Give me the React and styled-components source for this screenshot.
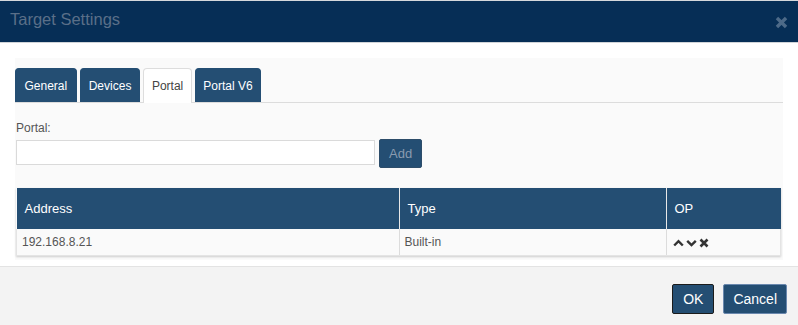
import styled, { createGlobalStyle } from "styled-components";

const GlobalStyle = createGlobalStyle`
  body {
    margin: 0;
    background: #ffffff;
    font-family: "Liberation Sans", Arial, sans-serif;
  }
`;

const Modal = styled.div`
  width: 798px;
  height: 325px;
  display: flex;
  flex-direction: column;
  background: #ffffff;
`;

const Header = styled.header`
  height: 43px;
  border-top: 1px solid #d5d8dc;
  border-bottom: 1px solid #d0d4d8;
  background: #062e56;
  display: flex;
  align-items: center;
  justify-content: space-between;
  padding: 0 10px;
  box-sizing: border-box;
  flex: 0 0 auto;
`;

const Title = styled.h4`
  margin: 0;
  font-size: 16.5px;
  font-weight: normal;
  color: #5a6f88;
  margin-top: -4px;
`;

const Close = styled.span`
  display: flex;
  margin-top: 2px;
`;

const Body = styled.div`
  padding: 15px 15px 6px 15px;
  flex: 0 0 auto;
`;

const Panel = styled.div`
  background: #fafafa;
  padding-top: 10px;
  height: 192px;
`;

const Tabs = styled.div`
  display: flex;
  gap: 3px;
  border-bottom: 1px solid #dcdcdc;
  height: 34px;
`;

const Tab = styled.div`
  height: 34px;
  box-sizing: border-box;
  padding: 0 ${(p) => p.$pad || 9}px;
  display: flex;
  align-items: center;
  font-size: 12px;
  border-radius: 4px 4px 0 0;
  background: ${(p) => (p.$active ? "#ffffff" : "#244e73")};
  color: ${(p) => (p.$active ? "#444" : "#fff")};
  border: 1px solid ${(p) => (p.$active ? "#dddddd" : "#244e73")};
  border-bottom: none;
  ${(p) => p.$active && "height: 35px; margin-bottom: -1px;"}
`;

const Form = styled.div`
  padding: 18px 1px 0 1px;
`;

const Label = styled.div`
  font-size: 12px;
  color: #555;
  margin-bottom: 4px;
`;

const InputRow = styled.div`
  display: flex;
  align-items: flex-start;
  gap: 4px;
`;

const Input = styled.input`
  width: 359px;
  height: 25px;
  box-sizing: border-box;
  border: 1px solid #dadada;
  background: #fff;
  margin: 1px 0 0 0;
  outline: none;
`;

const Button = styled.button`
  font-family: "Liberation Sans", Arial, sans-serif;
  background: #244e73;
  border: 1px solid ${(p) => p.$border || "#1c3e5c"};
  border-radius: 2px;
  color: ${(p) => p.$color || "#fff"};
  font-size: ${(p) => p.$size || 13}px;
  height: ${(p) => p.$h || 30}px;
  padding: 0 ${(p) => p.$pad || 10}px;
  cursor: pointer;
`;

const Table = styled.table`
  margin-top: 20px;
  width: 765px;
  border-collapse: collapse;
  box-shadow: 0 1px 2px rgba(0, 0, 0, 0.18);
  font-size: 12px;
`;

const Th = styled.th`
  background: #244e73;
  color: #fff;
  font-weight: normal;
  text-align: left;
  height: 41px;
  padding: 0 8px;
  font-size: 13px;
  border-left: 1px solid #e8e8e8;
  &:first-child {
    border-left: none;
  }
`;

const Td = styled.td`
  background: #fafafa;
  color: #555;
  height: 26px;
  padding: 0 5px;
  border-left: 1px solid #dcdcdc;
  border-bottom: 1px solid #e4e4e4;
  &:first-child {
    border-left: 1px solid #e4e4e4;
  }
  &:last-child {
    border-right: 1px solid #e4e4e4;
  }
`;

const Ops = styled.span`
  display: inline-flex;
  gap: 2px;
  align-items: center;
  margin-top: 3px;
  padding-left: 1px;
`;

const Footer = styled.footer`
  flex: 1;
  background: #f3f3f3;
  border-top: 1px solid #e3e3e3;
  display: flex;
  justify-content: flex-end;
  align-items: flex-start;
  gap: 9px;
  padding: 17px 11px 0 0;
`;

const Times = ({ size = 10, color = "#333" }) => (
  <svg width={size} height={size} viewBox="0 0 10 10">
    <path d="M1.5 1.5 L8.5 8.5 M8.5 1.5 L1.5 8.5" stroke={color} strokeWidth="2.6" />
  </svg>
);

const Chevron = ({ up }) => (
  <svg width="11" height="8" viewBox="0 0 11 8">
    <path
      d={up ? "M1.2 6.5 L5.5 2.2 L9.8 6.5" : "M1.2 1.8 L5.5 6.1 L9.8 1.8"}
      fill="none"
      stroke="#333"
      strokeWidth="2.4"
    />
  </svg>
);

export default function App() {
  return (
    <>
      <GlobalStyle />
      <Modal>
        <Header>
          <Title>Target Settings</Title>
          <Close>
            <Times size={13} color="#4d6a88" />
          </Close>
        </Header>
        <Body>
          <Panel>
            <Tabs>
              <Tab $pad={8.5}>General</Tab>
              <Tab $pad={8}>Devices</Tab>
              <Tab $active $pad={7.5}>Portal</Tab>
              <Tab $pad={7.5}>Portal V6</Tab>
            </Tabs>
            <Form>
              <Label>Portal:</Label>
              <InputRow>
                <Input />
                <Button $color="#8a9bb0" $h={29} $pad={9} $border="#2d4d6a">
                  Add
                </Button>
              </InputRow>
              <Table>
                <thead>
                  <tr>
                    <Th style={{ width: 366 }}>Address</Th>
                    <Th style={{ width: 250 }}>Type</Th>
                    <Th>OP</Th>
                  </tr>
                </thead>
                <tbody>
                  <tr>
                    <Td>192.168.8.21</Td>
                    <Td>Built-in</Td>
                    <Td>
                      <Ops>
                        <Chevron up />
                        <Chevron />
                        <Times size={10} />
                      </Ops>
                    </Td>
                  </tr>
                </tbody>
              </Table>
            </Form>
          </Panel>
        </Body>
        <Footer>
          <Button $border="#1b1b1b" $size={14} $pad={10}>
            OK
          </Button>
          <Button $border="#6a88ae" $size={14} $pad={9}>
            Cancel
          </Button>
        </Footer>
      </Modal>
    </>
  );
}
